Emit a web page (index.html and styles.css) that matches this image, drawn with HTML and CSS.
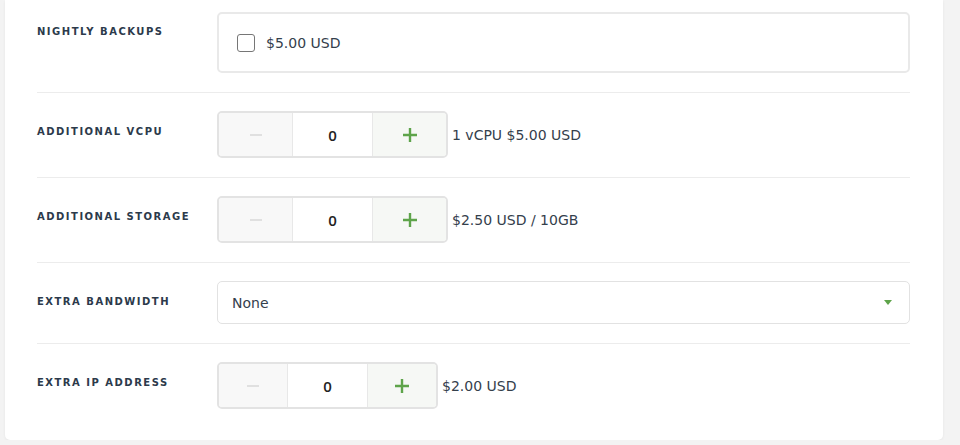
FILE: index.html
```html
<!DOCTYPE html>
<html lang="en">
<head>
    <meta charset="UTF-8">
    <meta name="viewport" content="width=device-width, initial-scale=1.0">
    <title>Configurable Options</title>
    <link rel="stylesheet" href="styles.css">
</head>
<body>
    <div class="panel">
        <div class="option-row first">
            <div class="option-label">Nightly Backups</div>
            <div class="option-field">
                <label class="check-box">
                    <input type="checkbox">
                    <span>$5.00 USD</span>
                </label>
            </div>
        </div>

        <div class="option-row">
            <div class="option-label">Additional vCPU</div>
            <div class="option-field inline">
                <div class="stepper">
                    <button class="step minus"><svg width="14" height="14" viewBox="0 0 14 14"><path d="M1 7h12" stroke="currentColor" stroke-width="2"/></svg></button>
                    <input class="step-value" type="text" value="0">
                    <button class="step plus"><svg width="16" height="16" viewBox="0 0 16 16"><path d="M1 8h14M8 1v14" stroke="currentColor" stroke-width="2.4"/></svg></button>
                </div>
                <span class="price">1 vCPU $5.00 USD</span>
            </div>
        </div>

        <div class="option-row">
            <div class="option-label">Additional Storage</div>
            <div class="option-field inline">
                <div class="stepper">
                    <button class="step minus"><svg width="14" height="14" viewBox="0 0 14 14"><path d="M1 7h12" stroke="currentColor" stroke-width="2"/></svg></button>
                    <input class="step-value" type="text" value="0">
                    <button class="step plus"><svg width="16" height="16" viewBox="0 0 16 16"><path d="M1 8h14M8 1v14" stroke="currentColor" stroke-width="2.4"/></svg></button>
                </div>
                <span class="price">$2.50 USD / 10GB</span>
            </div>
        </div>

        <div class="option-row">
            <div class="option-label">Extra Bandwidth</div>
            <div class="option-field">
                <div class="select-box">
                    <span>None</span>
                    <span class="caret"></span>
                </div>
            </div>
        </div>

        <div class="option-row last">
            <div class="option-label">Extra IP Address</div>
            <div class="option-field inline">
                <div class="stepper narrow">
                    <button class="step minus"><svg width="14" height="14" viewBox="0 0 14 14"><path d="M1 7h12" stroke="currentColor" stroke-width="2"/></svg></button>
                    <input class="step-value" type="text" value="0">
                    <button class="step plus"><svg width="16" height="16" viewBox="0 0 16 16"><path d="M1 8h14M8 1v14" stroke="currentColor" stroke-width="2.4"/></svg></button>
                </div>
                <span class="price">$2.00 USD</span>
            </div>
        </div>
    </div>
</body>
</html>
```

FILE: styles.css
```css
body {
    margin: 0;
    background-color: #f3f3f3;
    font-family: "DejaVu Sans", sans-serif;
    color: #34404c;
}
.panel {
    width: 873px;
    margin-left: 5px;
    padding: 0 33px 31px 32px;
    background-color: #fff;
    border-radius: 0 0 5px 5px;
    box-shadow: 0 1px 3px rgba(0, 0, 0, 0.06);
}
.option-row {
    display: flex;
    padding: 18px 0 19px;
    border-bottom: 1px solid #ececec;
}
.option-row.first {
    padding-top: 12px;
}
.option-row.last {
    border-bottom: none;
    padding-bottom: 0;
}
.option-label {
    width: 180px;
    flex-shrink: 0;
    padding-top: 15px;
    font-size: 10px;
    font-weight: bold;
    letter-spacing: 1.5px;
    text-transform: uppercase;
    color: #2c3a4b;
}
.option-row.first .option-label {
    padding-top: 14px;
}
.option-field {
    flex: 1;
}
.option-field.inline {
    display: flex;
    align-items: center;
    gap: 4px;
}
.check-box {
    display: flex;
    align-items: center;
    gap: 11px;
    height: 57px;
    padding-left: 18px;
    border: 2px solid #e9e9e9;
    border-radius: 5px;
    font-size: 14px;
}
.check-box input {
    appearance: none;
    width: 18px;
    height: 18px;
    margin: 1px 0 0 0;
    border: 1px solid #767676;
    border-radius: 3px;
    background: #fff;
}
.stepper {
    display: flex;
    height: 43px;
    border: 2px solid #e3e3e3;
    border-radius: 5px;
    overflow: hidden;
}
.step {
    display: flex;
    align-items: center;
    justify-content: center;
    width: 74px;
    border: none;
    background-color: #f8f8f8;
    padding: 0;
}
.step.minus {
    color: #e0e0e0;
    border-right: 1px solid #e8e8e8;
}
.step.plus {
    color: #5ea44a;
    background-color: #f6f8f5;
    border-left: 1px solid #e8e8e8;
}
.step-value {
    width: 79px;
    border: none;
    text-align: center;
    font-family: "Open Sans", sans-serif;
    font-size: 15px;
    font-weight: 600;
    color: #222;
    padding: 0;
}
.stepper.narrow .step.minus {
    width: 69px;
}
.stepper.narrow .step.plus {
    width: 69px;
}
.price {
    font-size: 14px;
}
.select-box {
    display: flex;
    align-items: center;
    justify-content: space-between;
    height: 41px;
    padding: 0 17px 0 14px;
    border: 1px solid #e2e2e2;
    border-radius: 5px;
    font-size: 14px;
}
.caret {
    width: 0;
    height: 0;
    border-left: 4px solid transparent;
    border-right: 4px solid transparent;
    border-top: 5px solid #5ea44a;
}
```
